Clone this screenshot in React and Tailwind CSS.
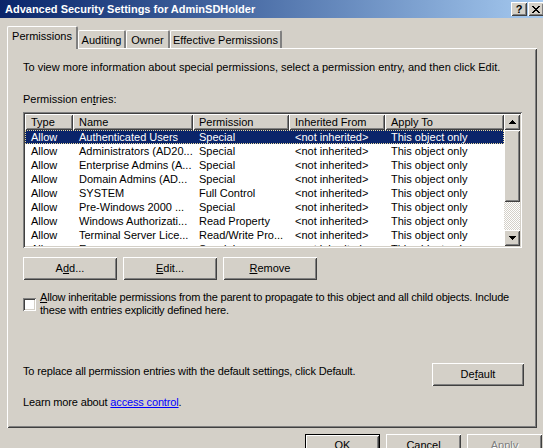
import React from "react";

// Windows classic 3D edges
const raised =
  "shadow-[inset_1px_1px_0_0_#ffffff,inset_-1px_-1px_0_0_#404040,inset_2px_2px_0_0_#d4d0c8,inset_-2px_-2px_0_0_#808080]";
const sunken =
  "shadow-[inset_1px_1px_0_0_#808080,inset_-1px_-1px_0_0_#ffffff,inset_2px_2px_0_0_#404040,inset_-2px_-2px_0_0_#d4d0c8]";

const font = "font-['Tahoma','Liberation_Sans',Arial,sans-serif]";

const columns = [
  { label: "Type", w: "w-[48px]" },
  { label: "Name", w: "w-[120px]" },
  { label: "Permission", w: "w-[96px]" },
  { label: "Inherited From", w: "w-[96px]" },
  { label: "Apply To", w: "w-[119px]" },
];

const entries = [
  ["Allow", "Authenticated Users", "Special"],
  ["Allow", "Administrators (AD20...", "Special"],
  ["Allow", "Enterprise Admins (A...", "Special"],
  ["Allow", "Domain Admins (AD...", "Special"],
  ["Allow", "SYSTEM", "Full Control"],
  ["Allow", "Pre-Windows 2000 ...", "Special"],
  ["Allow", "Windows Authorizati...", "Read Property"],
  ["Allow", "Terminal Server Lice...", "Read/Write Pro..."],
  ["Allow", "E...", "Special"],
];

const Arrow = ({ down }) => (
  <svg width="7" height="4" viewBox="0 0 7 4" shapeRendering="crispEdges">
    <polygon points={down ? "0,0 7,0 3.5,4" : "3.5,0 7,4 0,4"} fill="#000" />
  </svg>
);

const Button = ({ children, className = "", isDefault, disabled }) => (
  <div
    className={`h-[23px] flex items-center justify-center bg-[#d4d0c8] ${
      isDefault ? "border border-black" : ""
    } ${className}`}
  >
    <div
      className={`w-full h-full flex items-center justify-center ${raised} ${
        disabled ? "text-[#808080] [text-shadow:1px_1px_0_#fff]" : "text-black"
      }`}
    >
      {children}
    </div>
  </div>
);

const Tab = ({ label, selected, w }) => (
  <div
    className={`${w} ${
      selected ? "h-[23px] relative z-10" : "h-[18px] mb-[1px]"
    } pt-[3px] leading-[13px] bg-[#d4d0c8] border-l border-t border-white border-r-2 border-r-[#808080] rounded-tl-[2px] rounded-tr-[2px] flex justify-center text-black`}
  >
    {label}
  </div>
);

const PermissionList = () => (
  <div className={`w-[499px] h-[136px] p-[2px] bg-white ${sunken} flex`}>
    <div className="flex-1 flex flex-col overflow-hidden">
      <div className="flex h-[16px] shrink-0">
        {columns.map((c) => (
          <div
            key={c.label}
            className={`${c.w} shrink-0 bg-[#d4d0c8] pl-[6px] leading-[16px] ${raised} text-black`}
          >
            {c.label}
          </div>
        ))}
      </div>
      {entries.map((e, i) => (
        <div
          key={i}
          className={`flex h-[14px] shrink-0 leading-[14px] ${
            i === 0
              ? "bg-[#0a246a] text-white outline-1 outline-dotted outline-[#e8d89c] -outline-offset-1"
              : "text-black"
          }`}
        >
          {[e[0], e[1], e[2], "<not inherited>", "This object only"].map((t, j) => (
            <div key={j} className={`${columns[j].w} shrink-0 pl-[6px] whitespace-nowrap overflow-hidden`}>
              {t}
            </div>
          ))}
        </div>
      ))}
    </div>
    {/* vertical scrollbar */}
    <div className="w-[16px] flex flex-col">
      <div className={`h-[16px] bg-[#d4d0c8] ${raised} flex items-center justify-center`}>
        <Arrow />
      </div>
      <div className={`h-[72px] bg-[#d4d0c8] ${raised}`} />
      <div className="flex-1 bg-[repeating-conic-gradient(#ffffff_0_25%,#d4d0c8_0_50%)] bg-[length:2px_2px]" />
      <div className={`h-[16px] bg-[#d4d0c8] ${raised} flex items-center justify-center`}>
        <Arrow down />
      </div>
    </div>
  </div>
);

export default function App() {
  return (
    <div className={`w-[543px] h-[448px] overflow-hidden bg-[#d4d0c8] text-[11px] ${font}`}>
      {/* title bar */}
      <div className="h-[18px] flex items-center bg-gradient-to-r from-[#0a246a] to-[#a6caf0] pl-[5px] pr-0">
        <span className="flex-1 text-white font-bold text-[11px] leading-[18px]">
          Advanced Security Settings for AdminSDHolder
        </span>
        <div className="flex gap-[1px] mr-[-1px]">
          <div className={`w-[16px] h-[14px] bg-[#d4d0c8] ${raised} flex items-center justify-center font-bold text-[11px] leading-none text-black`}>
            ?
          </div>
          <div className={`w-[16px] h-[14px] bg-[#d4d0c8] ${raised} flex items-center justify-center`}>
            <svg width="8" height="7" viewBox="0 0 8 7" shapeRendering="crispEdges">
              <path d="M0.5 0 L7.5 7 M7.5 0 L0.5 7" stroke="#000" strokeWidth="1.6" />
            </svg>
          </div>
        </div>
      </div>

      {/* tabs */}
      <div className="mt-[8px] h-[23px] pl-[7px] flex items-end">
        <Tab label="Permissions" selected w="w-[71px]" />
        <Tab label="Auditing" w="w-[48px]" />
        <Tab label="Owner" w="w-[44px]" />
        <Tab label="Effective Permissions" w="w-[112px]" />
      </div>

      {/* tab panel */}
      <div className={`-mt-px ml-[7px] w-[530px] h-[380px] ${raised} pl-[16px] pt-[13px] flex flex-col text-black leading-[13px]`}>
        <p>To view more information about special permissions, select a permission entry, and then click Edit.</p>
        <p className="mt-[19px]">
          Permission en<span className="underline">t</span>ries:
        </p>
        <div className="mt-[6px]">
          <PermissionList />
        </div>

        <div className="mt-[9px] flex gap-[6px]">
          <Button className="w-[94px]">
            A<span className="underline">d</span>d...
          </Button>
          <Button className="w-[94px]">
            <span className="underline">E</span>dit...
          </Button>
          <Button className="w-[94px]">
            <span className="underline">R</span>emove
          </Button>
        </div>

        <div className="mt-[11px] flex items-center gap-[4px]">
          <div className={`w-[13px] h-[13px] bg-white ${sunken} shrink-0`} />
          <p className="tracking-[-0.2px]">
            <span className="underline">A</span>llow inheritable permissions from the parent to propagate to this object and all child objects. Include
            <br />
            these with entries explicitly defined here.
          </p>
        </div>

        <div className="mt-[46px] w-[501px] flex justify-between items-start">
          <p className="pt-[2px] tracking-[-0.15px]">To replace all permission entries with the default settings, click Default.</p>
          <Button className="w-[92px]">
            De<span className="underline">f</span>ault
          </Button>
        </div>

        <p className="mt-[10px] tracking-[-0.15px]">
          Learn more about <span className="text-[#0000ff] underline">access control</span>.
        </p>
      </div>

      {/* dialog buttons */}
      <div className="mt-[6px] flex justify-end gap-[6px] pr-[1px]">
        <Button className="w-[75px]" isDefault>
          OK
        </Button>
        <Button className="w-[75px]">Cancel</Button>
        <Button className="w-[75px]" disabled>
          Apply
        </Button>
      </div>
    </div>
  );
}
